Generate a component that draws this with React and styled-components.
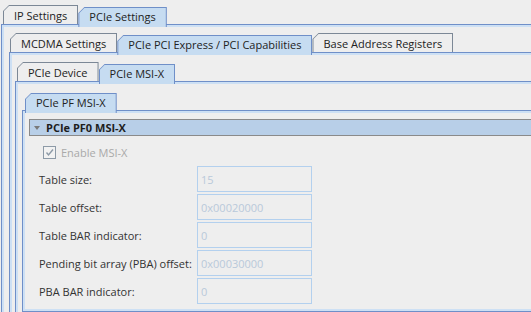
import React from 'react';
import styled, { createGlobalStyle } from 'styled-components';

const colors = {
  bg: '#eeeeee',
  line: '#6f8fc8',
  band: '#cde0f4',
  tabActive: '#c6dcf1',
  tabBorder: '#7c8896',
  text: '#222222',
  header: '#b8cfe8',
  headerBorder: '#8a8a8a',
  inputBorder: '#b3d0ee',
  inputText: '#b9c9da',
  disabled: '#a9a9a9',
};

const GlobalStyle = createGlobalStyle`
  html, body {
    margin: 0;
    padding: 0;
    background: ${colors.bg};
    overflow: hidden;
  }
  body {
    font-family: "Open Sans", "Noto Sans", sans-serif;
    font-size: 11px;
    color: ${colors.text};
  }
`;

const Page = styled.div`
  width: 531px;
  height: 312px;
  padding: 4px 0 0 1px;
  box-sizing: border-box;
  overflow: hidden;
  display: flex;
  flex-direction: column;
`;

const Pane = styled.div`
  display: flex;
  flex-direction: column;
  flex: 1;
  min-height: 0;
`;

const TabStrip = styled.div`
  display: flex;
  align-items: flex-end;
  height: 20px;
  padding-left: ${(p) => p.$inset}px;
  position: relative;
  z-index: 1;
`;

const Tab = styled.div`
  height: ${(p) => (p.$active ? 20 : 19)}px;
  margin-bottom: ${(p) => (p.$active ? -3 : 0)}px;
  background: ${(p) => (p.$active ? colors.line : colors.tabBorder)};
  clip-path: polygon(6px 0, 100% 0, 100% 100%, 0 100%, 0 6px);
  display: flex;
`;

const TabFace = styled.div`
  margin: 1px 1px 0 1px;
  padding: 0 10px;
  background: ${(p) => (p.$active ? colors.tabActive : colors.bg)};
  clip-path: polygon(5px 0, 100% 0, 100% 100%, 0 100%, 0 5px);
  display: flex;
  align-items: center;
  white-space: nowrap;
  padding-bottom: ${(p) => (p.$active ? 3 : 0)}px;
`;

const Body = styled.div`
  flex: 1;
  min-height: 0;
  border-top: 1px solid ${colors.line};
  border-left: 1px solid ${colors.line};
  box-shadow: inset 2px 2px 0 ${colors.band};
  padding: ${(p) => p.$top}px 0 0 ${(p) => p.$left}px;
  display: flex;
  flex-direction: column;
`;

const FormBody = styled(Body)`
  flex: none;
  border-bottom: 1px solid ${colors.line};
  box-shadow: inset 2px 2px 0 ${colors.band}, inset 0 -2px 0 ${colors.band};
  padding-bottom: 7px;
`;

const SectionHeader = styled.div`
  height: 15px;
  border: 1px solid ${colors.headerBorder};
  border-right: none;
  background: ${colors.header};
  display: flex;
  align-items: center;
  gap: 6px;
  padding-left: 4px;
  font-weight: bold;
  color: #1e1e1e;
`;

const Caret = styled.span`
  width: 0;
  height: 0;
  border-left: 3px solid transparent;
  border-right: 3px solid transparent;
  border-top: 4px solid #7a7a7a;
`;

const CheckRow = styled.label`
  display: flex;
  align-items: center;
  gap: 5px;
  height: 12px;
  margin: 10px 0 8px 14px;
  color: ${colors.disabled};
`;

const CheckBox = styled.span`
  width: 11px;
  height: 11px;
  border: 1px solid #8d9aa7;
  background: #f2f2f2;
  display: flex;
  align-items: center;
  justify-content: center;
`;

const Form = styled.div`
  display: grid;
  grid-template-columns: 158px 115px;
  grid-auto-rows: 26px;
  row-gap: 2px;
  padding-left: 10px;
  align-items: center;
`;

const Label = styled.span`
  color: #333333;
  white-space: nowrap;
`;

const Field = styled.div`
  height: 26px;
  box-sizing: border-box;
  border: 1px solid ${colors.inputBorder};
  color: ${colors.inputText};
  display: flex;
  align-items: center;
  padding-left: 3px;
`;

const TabBar = ({ tabs, active, inset }) => (
  <TabStrip $inset={inset}>
    {tabs.map((t) => (
      <Tab key={t} $active={t === active}>
        <TabFace $active={t === active}>{t}</TabFace>
      </Tab>
    ))}
  </TabStrip>
);

const fields = [
  ['Table size:', '15'],
  ['Table offset:', '0x00020000'],
  ['Table BAR indicator:', '0'],
  ['Pending bit array (PBA) offset:', '0x00030000'],
  ['PBA BAR indicator:', '0'],
];

const App = () => (
  <Page>
    <GlobalStyle />
    <Pane>
      <TabBar inset={2} tabs={['IP Settings', 'PCIe Settings']} active="PCIe Settings" />
      <Body $top={7} $left={7}>
        <Pane>
          <TabBar
            inset={1}
            tabs={['MCDMA Settings', 'PCIe PCI Express / PCI Capabilities', 'Base Address Registers']}
            active="PCIe PCI Express / PCI Capabilities"
          />
          <Body $top={8} $left={5}>
            <Pane>
              <TabBar inset={2} tabs={['PCIe Device', 'PCIe MSI-X']} active="PCIe MSI-X" />
              <Body $top={8} $left={6}>
                <Pane>
                  <TabBar inset={3} tabs={['PCIe PF MSI-X']} active="PCIe PF MSI-X" />
                  <FormBody $top={8} $left={6}>
                    <SectionHeader>
                      <Caret />
                      PCIe PF0 MSI-X
                    </SectionHeader>
                    <CheckRow>
                      <CheckBox>
                        <svg width="9" height="9" viewBox="0 0 9 9">
                          <path d="M1.5 4.5 L3.5 7 L8 1.5" fill="none" stroke="#8d9aa7" strokeWidth="1.4" />
                        </svg>
                      </CheckBox>
                      Enable MSI-X
                    </CheckRow>
                    <Form>
                      {fields.map(([label, value]) => (
                        <React.Fragment key={label}>
                          <Label>{label}</Label>
                          <Field>{value}</Field>
                        </React.Fragment>
                      ))}
                    </Form>
                  </FormBody>
                </Pane>
              </Body>
            </Pane>
          </Body>
        </Pane>
      </Body>
    </Pane>
  </Page>
);

export default App;
